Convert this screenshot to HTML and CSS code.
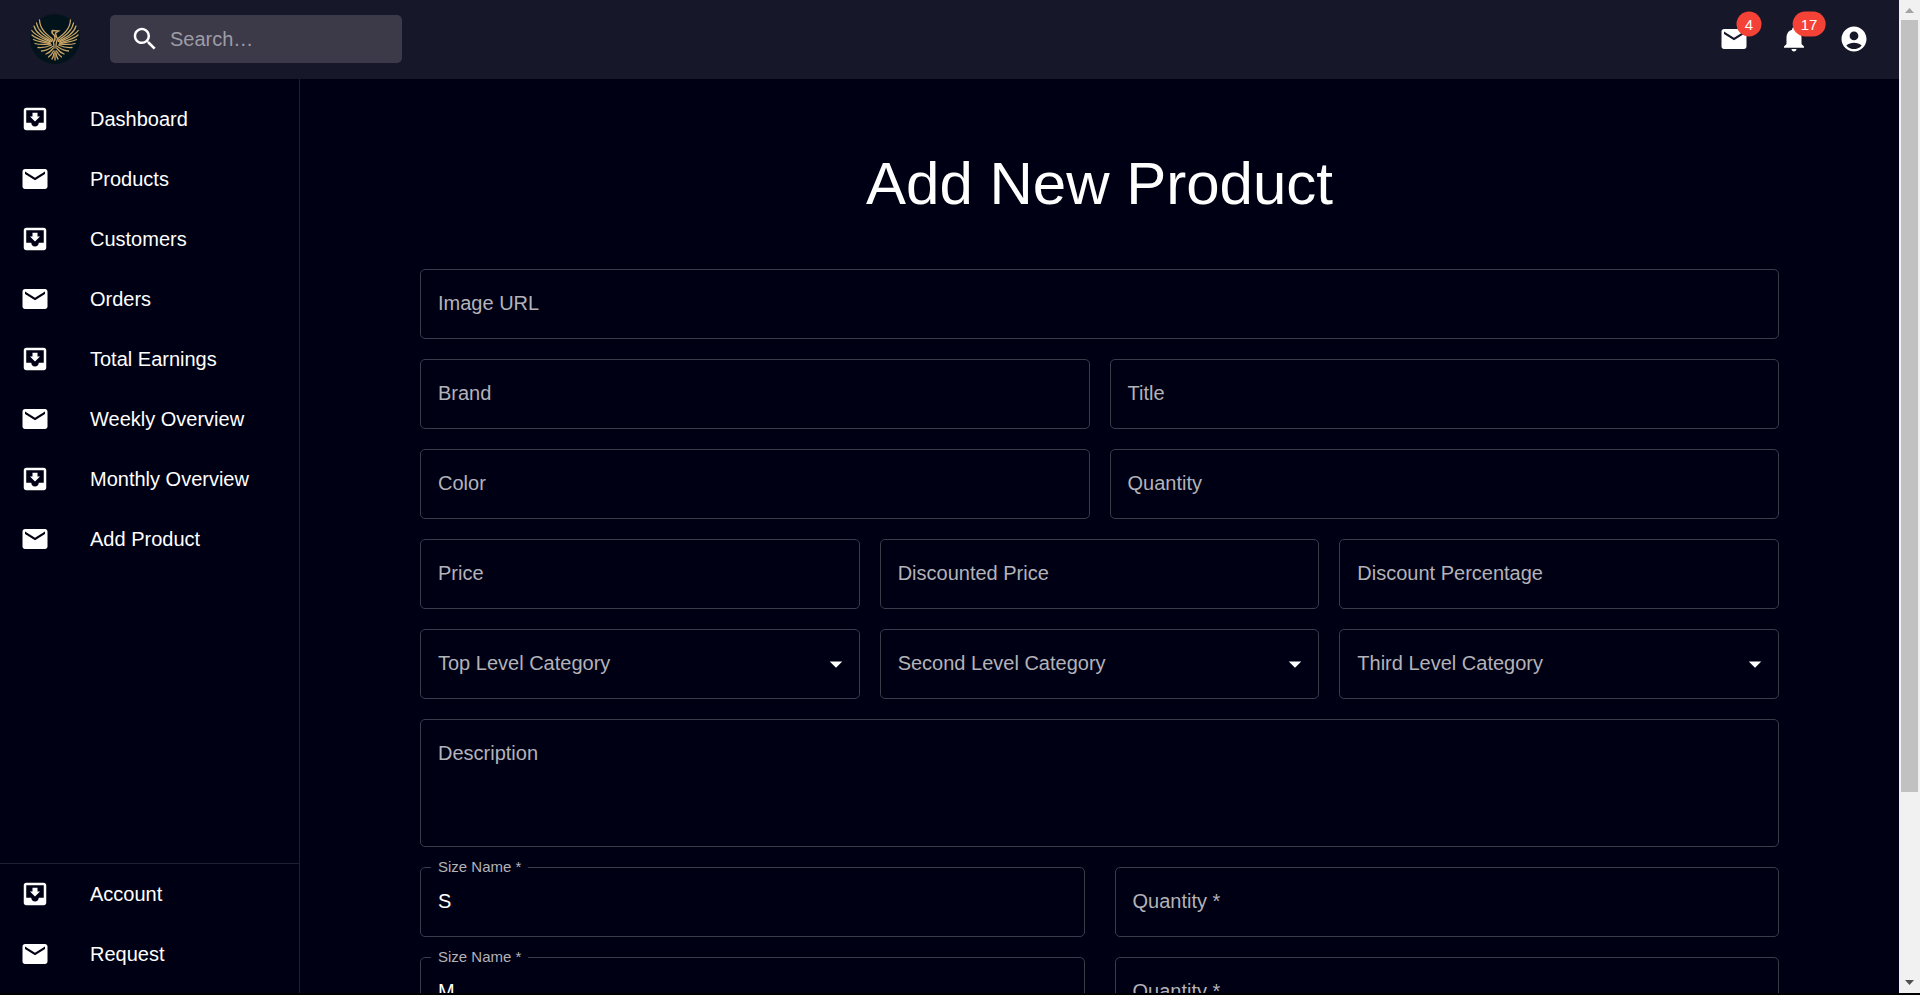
FILE: index.html
```html
<!DOCTYPE html>
<html lang="en">
<head>
<meta charset="utf-8">
<title>Add New Product</title>
<link rel="stylesheet" href="styles.css">
</head>
<body>
<svg class="sprite" aria-hidden="true">
  <symbol id="mail" viewBox="0 0 24 24"><path d="M20 4H4c-1.100 0-1.990.9-1.990 2L2 18c0 1.100.9 2 2 2h16c1.100 0 2-.9 2-2V6c0-1.100-.9-2-2-2zm0 4l-8 5-8-5V6l8 5 8-5v2z"/></symbol>
  <symbol id="inbox" viewBox="0 0 24 24"><path d="M19 3H4.990c-1.110 0-1.980.9-1.980 2L3 19c0 1.100.88 2 1.990 2H19c1.100 0 2-.9 2-2V5c0-1.100-.9-2-2-2zm0 12h-4c0 1.660-1.350 3-3 3s-3-1.340-3-3H4.990V5H19v10zm-3-5h-2V7h-4v3H8l4 4 4-4z"/></symbol>
  <symbol id="search" viewBox="0 0 24 24"><path d="M15.500 14h-.79l-.28-.27C15.410 12.590 16 11.110 16 9.500 16 5.910 13.090 3 9.500 3S3 5.910 3 9.500 5.910 16 9.500 16c1.610 0 3.090-.59 4.230-1.570l.27.28v.79l5 4.990L20.490 19l-4.990-5zm-6 0C7.010 14 5 11.990 5 9.500S7.010 5 9.500 5 14 7.010 14 9.500 11.990 14 9.500 14z"/></symbol>
  <symbol id="bell" viewBox="0 0 24 24"><path d="M12 22c1.100 0 2-.9 2-2h-4c0 1.100.89 2 2 2zm6-6v-5c0-3.070-1.640-5.640-4.500-6.320V4c0-.83-.67-1.500-1.500-1.500s-1.500.67-1.500 1.500v.68C7.630 5.360 6 7.920 6 11v5l-2 2v1h16v-1l-2-2z"/></symbol>
  <symbol id="account" viewBox="0 0 24 24"><path d="M12 2C6.480 2 2 6.480 2 12s4.480 10 10 10 10-4.480 10-10S17.520 2 12 2zm0 4c1.930 0 3.500 1.570 3.500 3.500S13.930 13 12 13s-3.500-1.570-3.500-3.500S10.070 6 12 6zm0 14c-2.030 0-4.430-.82-6.140-2.880C7.550 15.800 9.680 15 12 15s4.450.8 6.140 2.120C16.430 19.180 14.030 20 12 20z"/></symbol>
  <symbol id="arrow" viewBox="0 0 24 24"><path d="M7 10l5 5 5-5z"/></symbol>
</svg>
<div class="app">
  <div class="page">
    <header class="topbar">
      <a class="logo" href="#" aria-label="Home">
        <svg viewBox="0 0 50 50">
          <circle cx="25" cy="25" r="25" fill="#03131c"/>
          <g fill="none" stroke="#c9a565" stroke-width="1.300" stroke-linecap="round">
            <g id="wing">
              <path d="M9.500 6C10 15 16 20 22 24.500Q24 27 24 34"/>
              <path d="M6.500 9C8 17 14 21 22 26.500"/>
              <path d="M4 12C6 19 12 22.500 21.500 27.500"/>
              <path d="M1.800 16.500C5 21.500 12 24 20.500 28"/>
              <path d="M2 21C6 25 12 26 20 29"/>
              <path d="M3.500 25.500C8 28 14 28 20 29.500"/>
              <path d="M5 29.500C10 31 15 30.500 20.500 30"/>
              <path d="M8 33.500C13 34 17 33 21.500 31"/>
              <path d="M11.500 37C16 37 19 35 22.500 32.500"/>
              <path d="M16 40Q20 38.500 23 34.500"/>
              <path d="M18.500 43Q21.500 41 23.500 37"/>
              <path d="M22 45Q23.500 43 24 39"/>
            </g>
            <use href="#wing" transform="translate(50 0) scale(-1 1)"/>
            <path d="M25 37V46"/>
            <path d="M24.500 27Q26 22 23 20Q21 18 22.500 16.500L28.500 17L25.500 19Q26 22 27 24" stroke-width="1.500"/>
          </g>
        </svg>
      </a>
      <label class="search">
        <svg class="icon"><use href="#search"/></svg>
        <input type="search" placeholder="Search…" aria-label="Search">
      </label>
      <div class="actions">
        <button type="button" aria-label="4 new mails"><svg class="icon"><use href="#mail"/></svg><span class="badge">4</span></button>
        <button type="button" aria-label="17 new notifications"><svg class="icon"><use href="#bell"/></svg><span class="badge">17</span></button>
        <button type="button" aria-label="Account"><svg class="icon"><use href="#account"/></svg></button>
      </div>
    </header>
    <div class="body">
      <nav class="sidebar">
        <ul>
          <li><a href="#"><svg class="icon"><use href="#inbox"/></svg>Dashboard</a></li>
          <li><a href="#"><svg class="icon"><use href="#mail"/></svg>Products</a></li>
          <li><a href="#"><svg class="icon"><use href="#inbox"/></svg>Customers</a></li>
          <li><a href="#"><svg class="icon"><use href="#mail"/></svg>Orders</a></li>
          <li><a href="#"><svg class="icon"><use href="#inbox"/></svg>Total Earnings</a></li>
          <li><a href="#"><svg class="icon"><use href="#mail"/></svg>Weekly Overview</a></li>
          <li><a href="#"><svg class="icon"><use href="#inbox"/></svg>Monthly Overview</a></li>
          <li><a href="#"><svg class="icon"><use href="#mail"/></svg>Add Product</a></li>
        </ul>
        <ul class="secondary">
          <li><a href="#"><svg class="icon"><use href="#inbox"/></svg>Account</a></li>
          <li><a href="#"><svg class="icon"><use href="#mail"/></svg>Request</a></li>
        </ul>
      </nav>
      <main>
        <h1>Add New Product</h1>
        <form>
          <div class="row">
            <div class="field"><input id="image" type="text"><label for="image">Image URL</label></div>
          </div>
          <div class="row">
            <div class="field"><input id="brand" type="text"><label for="brand">Brand</label></div>
            <div class="field"><input id="title" type="text"><label for="title">Title</label></div>
          </div>
          <div class="row">
            <div class="field"><input id="color" type="text"><label for="color">Color</label></div>
            <div class="field"><input id="quantity" type="text"><label for="quantity">Quantity</label></div>
          </div>
          <div class="row">
            <div class="field"><input id="price" type="text"><label for="price">Price</label></div>
            <div class="field"><input id="dprice" type="text"><label for="dprice">Discounted Price</label></div>
            <div class="field"><input id="dpercent" type="text"><label for="dpercent">Discount Percentage</label></div>
          </div>
          <div class="row">
            <div class="field"><select id="top"><option></option></select><label for="top">Top Level Category</label><svg class="icon caret"><use href="#arrow"/></svg></div>
            <div class="field"><select id="second"><option></option></select><label for="second">Second Level Category</label><svg class="icon caret"><use href="#arrow"/></svg></div>
            <div class="field"><select id="third"><option></option></select><label for="third">Third Level Category</label><svg class="icon caret"><use href="#arrow"/></svg></div>
          </div>
          <div class="row">
            <div class="field"><textarea id="description"></textarea><label for="description">Description</label></div>
          </div>
          <div class="row sizes">
            <div class="field filled"><input id="size-s" type="text" value="S" required><label for="size-s">Size Name *</label></div>
            <div class="field"><input id="qty-s" type="text" required><label for="qty-s">Quantity *</label></div>
          </div>
          <div class="row sizes">
            <div class="field filled"><input id="size-m" type="text" value="M" required><label for="size-m">Size Name *</label></div>
            <div class="field"><input id="qty-m" type="text" required><label for="qty-m">Quantity *</label></div>
          </div>
        </form>
      </main>
    </div>
  </div>
  <div class="scrollbar" aria-hidden="true">
    <svg viewBox="0 0 21 20"><path d="M6 13L10.500 8L15 13z" fill="#a3a3a3"/></svg>
    <div class="track"><div class="thumb"></div></div>
    <svg viewBox="0 0 21 20"><path d="M6 7L10.500 12L15 7z" fill="#505050"/></svg>
  </div>
</div>
</body>
</html>
```
FILE: styles.css
```css
:root {
  --bg: #000014;
  --bar: #17172a;
  --line: #3b3b4a;
  --divider: #1f1f31;
  --muted: #b3b3b9;
}

* { box-sizing: border-box; }

html { background: #000; }

body {
  margin: 0;
  height: 100vh;
  padding-bottom: 2px;
  overflow: hidden;
  color: #fff;
  font: 20px/30px "Liberation Sans", Arial, sans-serif;
}

input, select, textarea, button {
  font: inherit;
  color: inherit;
  margin: 0;
  outline: 0;
}

.sprite { position: absolute; width: 0; height: 0; }
.icon { width: 30px; height: 30px; fill: currentColor; flex: none; display: block; }

.app { display: flex; height: 100%; }
.page { flex: 1; min-width: 0; display: flex; flex-direction: column; background: var(--bg); }

.topbar {
  flex: none;
  display: flex;
  align-items: center;
  padding: 14px 15px 15px 30px;
  background: var(--bar);
}
.logo { width: 50px; height: 50px; }
.logo svg { display: block; }
.search {
  display: flex;
  align-items: center;
  gap: 10px;
  width: 292px;
  height: 48px;
  margin-left: 30px;
  padding: 0 20px;
  border-radius: 5px;
  background: #3c3949;
}
.search input {
  flex: 1;
  min-width: 0;
  padding: 0;
  border: 0;
  background: none;
  appearance: none;
}
.search input::placeholder { color: #9e9ca5; opacity: 1; }

.actions { display: flex; margin-left: auto; }
.actions button {
  position: relative;
  padding: 10px 15px;
  border: 0;
  background: none;
}
.badge {
  position: absolute;
  top: 10px;
  left: 45px;
  transform: translate(-50%, -50%);
  min-width: 25px;
  padding: 0 8px;
  border-radius: 13px;
  background: #f44336;
  font-size: 15px;
  line-height: 25px;
}

.body { flex: 1; min-height: 0; display: flex; }

.sidebar {
  flex: none;
  width: 300px;
  display: flex;
  flex-direction: column;
  justify-content: space-between;
  border-right: 1px solid var(--divider);
}
.sidebar ul { margin: 0; padding: 10px 0; list-style: none; }
.sidebar .secondary { padding: 0 0 9px; border-top: 1px solid var(--divider); }
.sidebar a {
  display: flex;
  align-items: center;
  gap: 40px;
  padding: 15px 20px;
  color: #fff;
  text-decoration: none;
}

main { flex: 1; min-width: 0; overflow: hidden; padding: 70px 120px 0; }
h1 {
  margin: 0 0 50px;
  font-size: 60px;
  line-height: 70px;
  font-weight: 400;
  text-align: center;
}

form { display: grid; gap: 20px; }
.row { display: grid; grid-auto-flow: column; grid-auto-columns: minmax(0, 1fr); gap: 20px; }
.sizes { gap: 30px; }

.field { position: relative; display: grid; }
.field input, .field select, .field textarea {
  width: 100%;
  height: 70px;
  padding: 18px 17px 20px;
  border: 1px solid var(--line);
  border-radius: 5px;
  background: none;
  appearance: none;
  resize: none;
}
.field textarea { height: 128px; display: block; }
.field label {
  position: absolute;
  top: 19px;
  left: 18px;
  color: var(--muted);
  pointer-events: none;
}
.field.filled label {
  top: -10px;
  left: 11px;
  padding: 0 7px;
  background: var(--bg);
  font-size: 15px;
  line-height: 20px;
}
.caret { position: absolute; right: 9px; top: 20px; pointer-events: none; }

.scrollbar {
  flex: none;
  width: 21px;
  display: flex;
  flex-direction: column;
  background: #f1f1f1;
}
.scrollbar svg { display: block; width: 21px; height: 20px; }
.track { flex: 1; padding: 0 2px; }
.thumb { height: 81%; background: #c1c1c1; }
```
